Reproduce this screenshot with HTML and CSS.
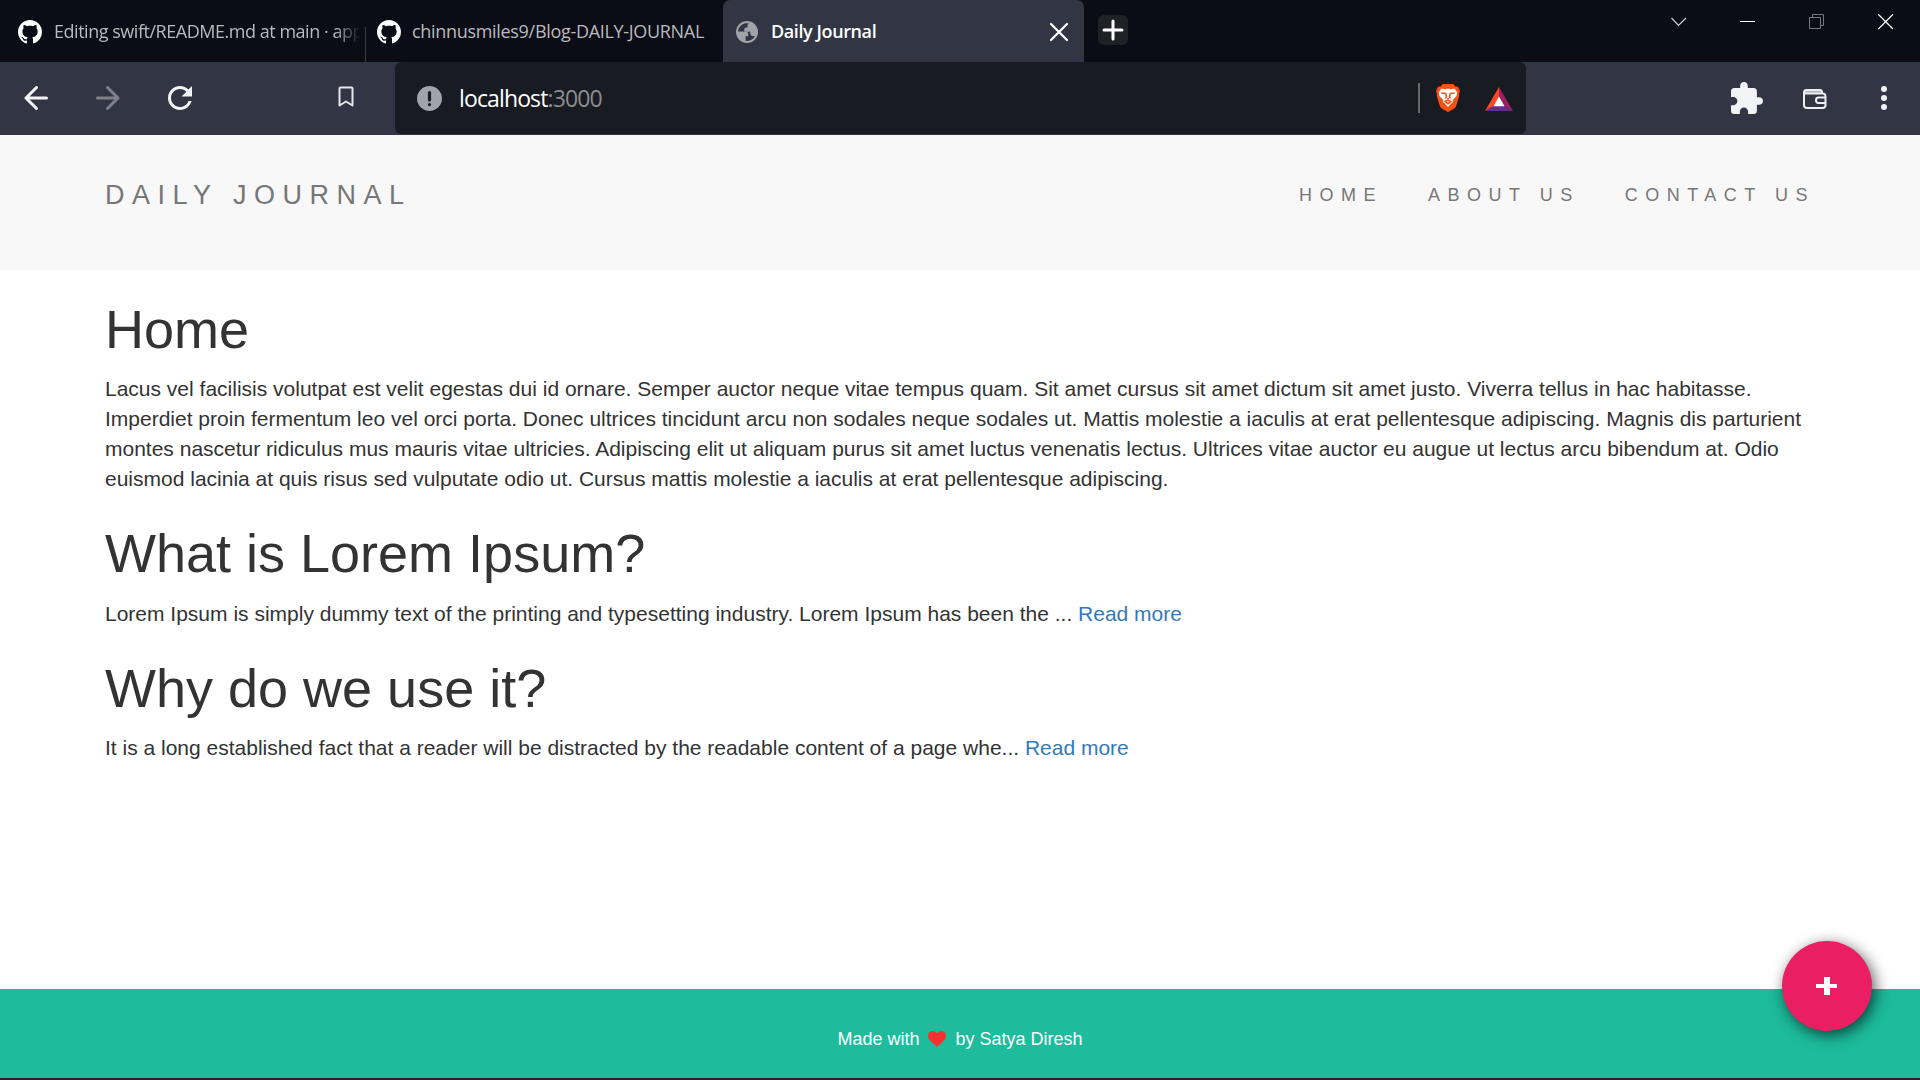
FILE: index.html
```html
<!DOCTYPE html>
<html lang="en">
<head>
<meta charset="utf-8">
<title>Daily Journal</title>
<link rel="stylesheet" href="styles.css">
</head>
<body>
<svg class="defs" width="0" height="0" aria-hidden="true">
  <symbol id="github" viewBox="0 0 16 16"><path d="M8 0C3.58 0 0 3.58 0 8c0 3.54 2.29 6.53 5.47 7.59.4.07.55-.17.55-.38 0-.19-.01-.82-.01-1.49-2.01.37-2.53-.49-2.69-.94-.09-.23-.48-.94-.82-1.13-.28-.15-.68-.52-.01-.53.63-.01 1.08.58 1.23.82.72 1.21 1.87.87 2.33.66.07-.52.28-.87.51-1.07-1.78-.2-3.64-.89-3.64-3.95 0-.87.31-1.59.82-2.15-.08-.2-.36-1.02.08-2.12 0 0 .67-.21 2.2.82.64-.18 1.32-.27 2-.27s1.36.09 2 .27c1.53-1.04 2.2-.82 2.2-.82.44 1.1.16 1.92.08 2.12.51.56.82 1.27.82 2.15 0 3.07-1.87 3.75-3.65 3.95.29.25.54.73.54 1.48 0 1.07-.01 1.93-.01 2.2 0 .21.15.46.55.38A8.01 8.01 0 0 0 16 8c0-4.42-3.58-8-8-8z"/></symbol>
</svg>

<div class="tabstrip">
  <div class="tab tab-first"><svg class="favicon" width="24" height="24"><use href="#github"/></svg><span class="tab-title fade">Editing swift/README.md at main · app</span></div>
  <div class="tab tab-second"><svg class="favicon" width="24" height="24"><use href="#github"/></svg><span class="tab-title">chinnusmiles9/Blog-DAILY-JOURNAL</span></div>
  <div class="tab tab-active">
    <svg width="22" height="22" viewBox="0 0 22 22"><circle cx="11" cy="11" r="11" fill="#a0a3aa"/><path d="M9.5 2.2A9 9 0 0 0 2.1 10.5H9.7Q12.2 10.5 12.2 13v2.2H9.5V19.8Q14 20.6 17.3 17.5L18.8 15H16.5Q14.3 15 14.3 12.5V10.8H8.3V8Q8.3 6.5 10 6.5H11.5V4.5Q11.5 2.6 13 2.2Z" fill="#323544"/><path d="M3 10.5Q3 14 6.5 15.5Q9.5 16.5 9.5 19.5Q3 18.5 2.5 12Z" fill="#a0a3aa"/></svg>
    <span class="tab-title">Daily Journal</span>
    <svg class="tab-close" width="20" height="20" viewBox="0 0 20 20" fill="none" stroke="#fff" stroke-width="2.2" stroke-linecap="round"><path d="M2 2 18 18M18 2 2 18"/></svg>
  </div>
  <div class="new-tab"><svg width="22" height="22" viewBox="0 0 22 22" fill="none" stroke="#fff" stroke-width="3" stroke-linecap="round"><path d="M11 2v18M2 11h18"/></svg></div>
  <div class="window-controls">
    <svg width="16" height="16" viewBox="0 0 16 16" fill="none" stroke="#d0d0d3" stroke-width="1.2"><path d="M.5 4 7.5 11.5 15 4"/></svg>
    <svg width="16" height="16" viewBox="0 0 16 16"><path d="M0 7h15v1H0z" fill="#fff"/></svg>
    <svg width="16" height="16" viewBox="0 0 16 16" fill="none" stroke="#77787f"><path d="M.5 3.5h11v11H.5zM3.5 3.5v-3h11v11h-3"/></svg>
    <svg width="16" height="16" viewBox="0 0 16 16" fill="none" stroke="#fff" stroke-width="1.3"><path d="M.3.3 15 15M15 .3.3 15"/></svg>
  </div>
</div>

<div class="toolbar">
  <div class="nav-buttons">
    <svg width="24" height="24" viewBox="0 0 24 24" fill="none" stroke="#f1f3f5" stroke-width="3" stroke-linecap="round" stroke-linejoin="round"><path d="M22.5 12H2M12.5 1.5 2 12l10.5 10.5"/></svg>
    <svg width="24" height="24" viewBox="0 0 24 24" fill="none" stroke="#7e808b" stroke-width="3" stroke-linecap="round" stroke-linejoin="round"><path d="M1.5 12H22M11.5 1.5 22 12 11.5 22.5"/></svg>
    <svg width="24" height="24" viewBox="4 4 16 16" fill="#f1f3f5"><path d="M17.65 6.35C16.2 4.9 14.21 4 12 4c-4.42 0-7.99 3.58-7.99 8s3.57 8 7.99 8c3.73 0 6.84-2.55 7.73-6h-2.08c-.82 2.33-3.04 4-5.65 4-3.31 0-6-2.69-6-6s2.69-6 6-6c1.66 0 3.14.69 4.22 1.78L13 11h7V4l-2.35 2.35z"/></svg>
  </div>
  <svg class="bookmark" width="16" height="21" viewBox="0 0 16 21" fill="none" stroke="#e6e7ea" stroke-width="2" stroke-linejoin="round"><path d="M1.5 2.5Q1.5 1.5 2.5 1.5h11Q14.5 1.5 14.5 2.5v17L8 15.5 1.5 19.5z"/></svg>
  <div class="address">
    <svg width="25" height="25" viewBox="0 0 25 25"><circle cx="12.5" cy="12.5" r="12.5" fill="#a0a3aa"/><path d="M12.5 6.5v7.5M12.5 18.5v.1" stroke="#181b22" stroke-width="3.2" stroke-linecap="round"/></svg>
    <span class="url">localhost<span class="port">:3000</span></span>
    <span class="separator"></span>
    <svg class="brave" width="24" height="28" viewBox="0 0 24 28"><path d="M7 0h10l2.5 2.5 2.5.3L24 7l-1 3 .2 2-3.2 10.5Q19.5 24 12 28 4.5 24 4 22.5L.8 12 1 10 0 7l2-4.2 2.5-.3z" fill="#fb5014"/><path d="M5.500000 4.5 9 5.2l3-.7 3 .7 3.5-.7L21.2 8.5l-.7 3.5-3.7 4 .3 2-1.600000 1.3L12 23l-3.500000-3.700000L6.900000 18l.3-2-3.7-4-.7-3.5z" fill="#fff"/><path d="m5.200000 9 4.500000.5.8 3-1 2M18.800000 9l-4.500000.5-.8 3 1 2M9 17.500000l3-1.500000 3 1.500000-3 2.200000zM12 14v3" fill="none" stroke="#fb5014" stroke-width="1.5"/></svg>
    <svg class="rewards" width="28" height="24" viewBox="0 0 28 24"><path d="M14 0v10L9 19 0 24z" fill="#ff4724"/><path d="M14 0v10l5 9 9 5z" fill="#9e1f63"/><path d="m0 24 9-5h10l9 5z" fill="#662d91"/><path d="M14 9.5 19.5 19.2h-11z" fill="#fff"/></svg>
  </div>
  <div class="extensions">
    <svg width="32" height="32" viewBox="2 1 21 21" fill="#f1f3f5"><path d="M20.5 11H19V7c0-1.1-.9-2-2-2h-4V3.5C13 2.12 11.88 1 10.5 1S8 2.12 8 3.5V5H4c-1.1 0-1.99.9-1.99 2v3.8H3.5c1.49 0 2.7 1.21 2.7 2.7s-1.21 2.7-2.7 2.7H2V20c0 1.1.9 2 2 2h3.8v-1.5c0-1.49 1.21-2.7 2.7-2.7 1.49 0 2.7 1.21 2.7 2.7V22H17c1.1 0 2-.9 2-2v-4h1.5c1.38 0 2.5-1.12 2.5-2.5S21.88 11 20.5 11z"/></svg>
    <svg class="wallet" width="24" height="20" viewBox="0 0 24 20" fill="none" stroke="#eceef0" stroke-width="2"><path d="M2 2h17v2.500000H2z" fill="#b5b6bb" stroke="none"/><path d="M3.500000 1H17q2 0 2.300000 3.500000H2M3.500000 1Q1 1 1 3.500000V16q0 3 3 3h15.500000q3 0 3-3V7.500000q0-3-3-3M23 8.500000h-7.500000q-2.500000 0-2.500000 2.700000T15.500000 14H23"/></svg>
    <svg class="dots" width="6" height="24" viewBox="0 0 6 24" fill="#f1f3f5"><circle cx="3" cy="3" r="3"/><circle cx="3" cy="12" r="3"/><circle cx="3" cy="21" r="3"/></svg>
  </div>
</div>

<header class="site-header">
  <a class="brand">DAILY JOURNAL</a>
  <nav class="site-nav"><a>HOME</a><a>ABOUT US</a><a>CONTACT US</a></nav>
</header>

<main class="content">
  <h1>Home</h1>
  <p>Lacus vel facilisis volutpat est velit egestas dui id ornare. Semper auctor neque vitae tempus quam. Sit amet cursus sit amet dictum sit amet justo. Viverra tellus in hac habitasse. Imperdiet proin fermentum leo vel orci porta. Donec ultrices tincidunt arcu non sodales neque sodales ut. Mattis molestie a iaculis at erat pellentesque adipiscing. Magnis dis parturient montes nascetur ridiculus mus mauris vitae ultricies. Adipiscing elit ut aliquam purus sit amet luctus venenatis lectus. Ultrices vitae auctor eu augue ut lectus arcu bibendum at. Odio euismod lacinia at quis risus sed vulputate odio ut. Cursus mattis molestie a iaculis at erat pellentesque adipiscing.</p>
  <h1>What is Lorem Ipsum?</h1>
  <p>Lorem Ipsum is simply dummy text of the printing and typesetting industry. Lorem Ipsum has been the ... <a class="more">Read more</a></p>
  <h1>Why do we use it?</h1>
  <p>It is a long established fact that a reader will be distracted by the readable content of a page whe... <a class="more">Read more</a></p>
</main>

<footer class="site-footer">
  <span>Made with</span>
  <svg width="18" height="16" viewBox="0 0 18 16"><path d="M9 16C6 13 0 9.5 0 4.8 0 2 2 0 4.6 0 6.5 0 8.2 1 9 2.5 9.8 1 11.5 0 13.4 0 16 0 18 2 18 4.8 18 9.5 12 13 9 16z" fill="#f8312f"/></svg>
  <span>by Satya Diresh</span>
  <a class="compose" aria-label="Compose"><svg width="21" height="18" viewBox="0 0 21 18"><path d="M8 0h6v7h7v4h-7v7H8v-7H0V7h8z" fill="#fff"/></svg></a>
</footer>
</body>
</html>
```
FILE: styles.css
```css
* { box-sizing: border-box; }
body {
  margin: 0;
  width: 1920px;
  height: 1080px;
  overflow: hidden;
  display: flex;
  flex-direction: column;
  background: #fff;
  color: #333;
  font: 21px/30px "Liberation Sans", Arial, sans-serif;
}
svg { display: block; flex: none; }
.defs { display: none; }

.tabstrip {
  display: flex;
  height: 62px;
  flex: none;
  background: #0b0c15;
  font: 18px/24px "Open Sans", "Noto Sans", sans-serif;
  color: #b9babd;
}
.tab { display: flex; align-items: center; height: 62px; padding-top: 2px; }
.tab-title { white-space: nowrap; padding-bottom: 2px; }
.favicon { fill: #fff; }
.tab-first { width: 366px; padding-left: 18px; gap: 12px; background: linear-gradient(#3b3b3f, #3b3b3f) right bottom / 1px 35px no-repeat; }
.tab-first .tab-title { letter-spacing: -0.47px; }
.fade { width: 306px; overflow: hidden; -webkit-mask-image: linear-gradient(90deg, #000 92%, transparent); mask-image: linear-gradient(90deg, #000 92%, transparent); }
.tab-second { width: 357px; padding-left: 11px; gap: 11px; }
.tab-second .tab-title { letter-spacing: -0.31px; }
.tab-active {
  width: 361px;
  padding-left: 13px;
  padding-right: 15px;
  gap: 13px;
  border-radius: 7px 7px 0 0;
  background: #323544;
  color: #fff;
  font-weight: 600;
}
.tab-active .tab-title { letter-spacing: -0.4px; }
.tab-close { margin-left: auto; }
.new-tab {
  display: flex;
  align-items: center;
  justify-content: center;
  width: 30px;
  height: 30px;
  margin: 15px 0 0 14px;
  border-radius: 6px;
  background: #202126;
}
.window-controls { display: flex; gap: 53px; margin: 14px 26px 0 auto; }

.toolbar { display: flex; align-items: center; height: 73px; flex: none; padding-bottom: 1px; background: #323544; }
.nav-buttons { display: flex; gap: 48px; padding-left: 24px; }
.bookmark { margin: -3px 41px 0 146px; }
.address {
  display: flex;
  align-items: center;
  width: 1131px;
  height: 72px;
  padding-left: 22px;
  border-radius: 6px;
  background: #181b22;
  color: #fff;
  font: 23px/32px "Open Sans", "Noto Sans", sans-serif;
}
.url { margin-left: 17px; padding-bottom: 1px; letter-spacing: -0.87px; }
.port { color: #8b8d91; }
.separator { width: 2px; height: 30px; margin-left: auto; background: #66686c; }
.brave { margin-left: 16px; }
.rewards { margin: 2px 13px 0 25px; }
.extensions { display: flex; align-items: center; margin-left: auto; padding-right: 33px; }
.wallet { margin-left: 40px; margin-top: 1px; }
.dots { margin-left: 54px; }

.site-header {
  display: flex;
  justify-content: space-between;
  height: 135px;
  flex: none;
  padding: 45px 105px 0 105px;
  background: #f8f8f8;
  color: #777;
  letter-spacing: 7.5px;
}
.brand { font-size: 27px; }
.site-nav { display: flex; gap: 45px; font-size: 18px; }

.content { flex: 1; padding: 30px 105px 0; }
h1 { margin: 0 0 15px; font-size: 54px; line-height: 59.4px; font-weight: 400; }
p { margin: 0 0 30px; }
.more { color: #337ab7; }

.site-footer {
  position: relative;
  display: flex;
  align-items: center;
  justify-content: center;
  gap: 9px;
  height: 91px;
  flex: none;
  padding-top: 11px;
  border-bottom: 2px solid #222;
  background: #1cbc9c;
  color: #fff;
  font-size: 18px;
}
.compose {
  position: absolute;
  right: 48px;
  top: -48px;
  display: flex;
  align-items: center;
  justify-content: center;
  width: 90px;
  height: 90px;
  padding-right: 1px;
  border-radius: 50%;
  background: #e91e63;
  box-shadow: 3px 4px 15px rgba(0, 0, 0, 0.65);
}
```
